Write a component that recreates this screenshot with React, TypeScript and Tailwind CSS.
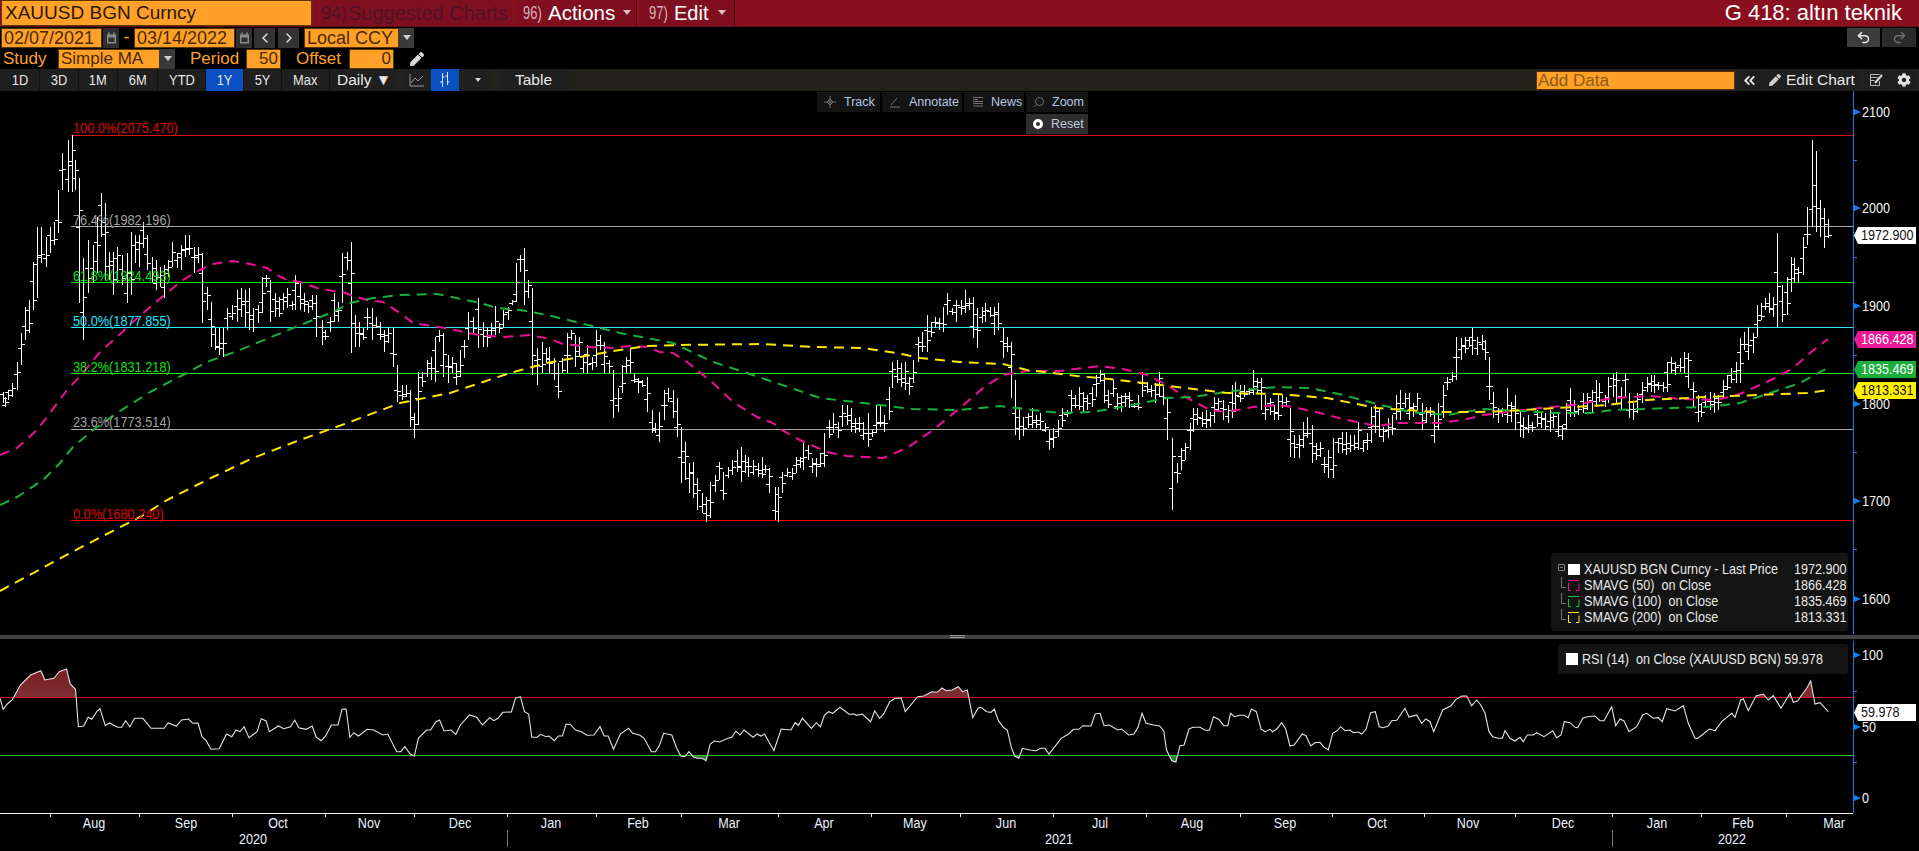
import React from "react";
import { ChevronLeft, ChevronRight, ChevronsLeft, Undo2, Redo2, Search } from "lucide-react";
import { FaCog, FaPen } from "react-icons/fa";

const BARS = `3,392,403 5,397,407 8,390,400 12,383,397 17,362,390 21,333,365 25,307,340 29,300,333 33,262,310 37,227,298 41,227,263 46,237,267 50,227,253 54,222,245 58,190,233 62,153,190 68,140,192 72,135,192 75,160,190 79,178,303 83,258,340 88,240,293 93,245,283 97,217,273 101,193,237 105,203,280 109,252,280 113,252,295 117,247,283 122,255,285 127,253,303 131,232,295 135,235,263 139,235,267 143,222,248 147,235,270 152,257,283 156,260,290 160,267,287 164,265,298 168,260,277 172,242,267 177,253,268 181,245,270 185,235,257 189,235,255 194,247,273 198,247,263 202,253,323 207,287,310 211,302,347 215,328,350 219,328,355 223,328,357 227,308,330 232,305,320 237,290,322 241,288,317 245,290,327 249,288,330 253,308,332 258,305,323 262,277,313 266,275,287 270,280,322 275,293,317 279,297,317 283,293,310 287,288,308 292,301,310 295,275,310 300,282,310 304,293,312 308,302,313 312,295,310 316,295,337 322,320,345 325,330,340 330,317,332 334,293,322 338,302,322 342,253,303 347,252,270 351,242,353 355,315,347 359,322,347 363,328,340 367,308,330 372,308,340 376,317,328 380,322,340 384,330,352 388,327,343 393,328,367 397,365,402 402,385,400 406,385,397 410,390,427 414,413,438 418,372,425 422,372,387 427,360,377 431,357,380 435,337,382 439,330,342 443,333,377 448,355,383 452,357,373 456,363,385 460,350,377 464,340,358 468,312,340 473,317,333 478,298,348 483,322,347 487,327,347 491,323,337 495,306,335 499,323,333 503,310,328 508,307,320 512,300,305 516,263,302 520,255,272 524,248,305 528,280,298 532,288,375 537,348,385 542,342,373 546,348,363 549,347,373 554,358,380 558,363,398 562,358,373 567,333,373 571,330,340 575,335,367 579,337,357 583,355,373 587,345,373 592,357,370 596,330,367 600,335,350 604,342,373 609,360,373 613,370,418 618,388,412 622,365,393 626,357,373 630,348,373 634,373,383 638,378,393 642,380,387 647,377,412 652,410,433 655,423,433 659,412,442 664,390,420 668,388,402 673,390,418 677,398,437 681,427,483 685,442,480 689,463,493 693,462,498 697,478,510 702,493,513 706,497,522 710,482,518 715,475,492 719,462,480 723,472,500 728,467,478 732,460,475 737,450,472 741,447,482 745,455,473 748,457,477 753,460,475 758,463,477 762,457,478 765,465,473 769,468,493 775,487,520 778,487,522 782,472,493 787,468,477 792,468,480 796,457,473 800,457,468 803,443,470 808,445,460 812,458,473 816,458,477 820,453,467 824,433,467 829,420,438 833,413,433 838,422,438 842,405,427 847,405,425 851,408,432 855,418,433 859,417,432 863,422,440 868,413,447 872,430,437 876,405,433 880,405,427 884,415,432 889,387,420 892,362,388 897,360,383 901,363,387 905,362,390 909,377,395 913,360,383 918,337,362 922,332,352 927,315,352 931,322,337 935,317,328 939,318,330 943,307,332 947,293,315 952,308,315 956,300,322 961,300,315 965,290,313 969,298,310 973,297,338 977,308,348 982,307,323 985,303,322 990,307,317 994,307,335 998,303,330 1003,328,358 1007,337,352 1011,342,398 1015,380,435 1019,407,440 1023,417,436 1028,413,428 1032,408,428 1036,415,428 1040,413,430 1045,423,432 1049,430,450 1053,428,448 1058,420,437 1062,408,427 1067,410,417 1071,390,413 1075,395,408 1079,387,410 1083,392,412 1087,395,410 1092,387,407 1096,375,397 1100,370,382 1104,373,403 1108,390,408 1113,380,397 1117,393,410 1121,395,412 1125,393,407 1129,392,408 1134,403,408 1138,395,410 1142,372,397 1147,382,393 1151,385,397 1155,383,403 1159,372,397 1163,387,405 1167,398,440 1172,438,510 1177,463,483 1181,448,470 1185,443,460 1190,423,450 1193,408,432 1197,408,425 1202,412,427 1206,410,428 1210,412,427 1214,397,423 1218,398,412 1223,400,420 1228,405,423 1232,385,418 1235,382,410 1240,385,402 1244,385,397 1249,388,395 1253,370,395 1257,378,393 1261,378,410 1265,395,420 1270,398,415 1274,405,420 1278,395,420 1282,395,408 1286,397,407 1290,408,457 1294,435,458 1299,435,458 1303,422,448 1307,417,438 1312,425,463 1316,443,460 1320,442,457 1324,457,473 1328,450,478 1333,438,478 1338,438,453 1342,432,453 1346,432,455 1350,435,452 1354,435,450 1358,422,450 1363,440,452 1367,433,450 1371,407,443 1375,405,433 1379,408,437 1383,427,442 1388,418,438 1392,415,435 1396,395,420 1400,390,420 1405,393,408 1409,393,420 1413,403,417 1417,393,410 1422,403,430 1426,407,423 1430,407,417 1434,412,443 1438,403,430 1443,385,418 1447,377,390 1452,372,382 1456,337,380 1461,338,360 1465,337,353 1469,337,347 1472,328,355 1477,337,355 1482,335,350 1485,340,360 1489,357,400 1493,392,418 1498,408,423 1502,408,417 1507,388,423 1511,402,422 1515,395,430 1520,410,437 1523,417,438 1528,415,433 1532,422,432 1537,410,427 1541,413,428 1545,413,430 1550,410,432 1553,412,428 1558,413,437 1562,425,440 1566,403,430 1570,388,417 1574,400,417 1578,405,415 1583,393,413 1587,393,410 1592,390,413 1596,380,407 1599,383,402 1605,395,407 1608,377,403 1613,373,397 1616,372,403 1621,387,410 1625,373,397 1629,393,418 1633,403,420 1637,393,413 1642,382,403 1647,377,392 1651,375,392 1654,375,393 1658,382,390 1663,382,392 1667,362,392 1671,357,373 1675,362,375 1680,358,372 1684,352,373 1688,353,388 1693,382,407 1698,395,422 1701,403,417 1705,395,407 1710,392,410 1714,393,413 1718,395,410 1723,380,398 1727,375,390 1731,368,383 1736,362,383 1740,338,383 1744,332,350 1748,327,360 1753,333,353 1757,305,337 1761,303,320 1765,298,310 1769,293,313 1773,297,317 1777,233,327 1782,285,322 1787,277,315 1791,257,292 1794,258,283 1798,267,283 1803,237,275 1807,207,245 1812,140,227 1816,151,232 1820,200,237 1824,208,248 1828,219,238`
  .split(" ").map((s) => s.split(",").map(Number));

const rnd = (i: number) => { const v = Math.sin(i * 12.9898) * 43758.5453; return v - Math.floor(v); };
const barsPath = BARS.map(([x, t, b], i) => {
  const o = Math.round(t + (b - t) * (0.2 + 0.6 * rnd(i)));
  const c = i === BARS.length - 1 ? 235 : Math.round(t + (b - t) * (0.2 + 0.6 * rnd(i + 500)));
  return `M${x + 0.5} ${t}V${b}M${x - 3} ${o + 0.5}H${x}M${x + 1} ${c + 0.5}H${x + 4}`;
}).join("");

const PINK = "0,455 17,448 37,430 50,413 67,390 83,373 100,352 117,337 133,322 150,307 167,293 183,280 200,270 213,264 233,261 250,264 267,268 277,275 287,280 300,282 317,288 333,291 343,292 353,296 367,300 383,302 400,313 413,323 433,326 450,329 473,334 480,335 503,337 530,335 550,339 563,344 590,347 613,348 630,346 647,347 660,352 673,353 687,362 713,383 733,402 757,417 773,423 780,429 800,440 827,452 847,456 883,458 907,448 933,430 960,408 983,388 1003,375 1027,371 1060,371 1100,366 1123,369 1147,375 1167,385 1187,398 1210,410 1227,412 1253,407 1277,405 1293,407 1320,413 1343,419 1377,426 1397,423 1440,423 1463,420 1483,415 1540,408 1573,405 1613,398 1650,396 1680,399 1717,400 1740,394 1773,379 1793,368 1810,353 1828,339";
const GREEN = "0,505 17,497 43,480 60,463 73,447 93,430 117,413 150,392 183,375 207,362 240,350 293,328 333,312 350,303 373,298 400,295 437,294 480,303 497,308 520,310 547,315 580,323 620,333 673,343 713,362 747,373 797,390 820,398 863,403 913,409 960,410 1000,406 1033,410 1060,413 1093,412 1127,406 1167,398 1193,397 1233,391 1277,387 1310,388 1343,395 1377,404 1410,412 1447,415 1483,409 1557,413 1590,413 1613,410 1673,408 1707,407 1740,403 1773,392 1800,383 1828,368";
const YELLOW = "0,591 70,553 140,517 167,500 213,477 253,458 300,440 350,422 400,403 450,393 480,383 510,373 547,363 580,357 613,351 647,346 680,345 763,344 813,347 863,348 897,353 920,358 960,362 1003,364 1027,370 1077,376 1110,379 1143,383 1177,387 1227,393 1277,394 1327,398 1377,408 1437,412 1473,412 1507,411 1557,408 1607,405 1647,400 1707,397 1757,395 1807,393 1828,390";

const R1 = [0,205,8,238,18,222,30,210,50,165,75,135,100,122,110,150,132,145,145,125,163,117,172,162,185,178,192,290,205,288,216,262,225,268,238,243,245,236,258,287,268,279,288,292,298,292,308,272,318,290,330,265,350,265,370,295,402,295,412,279,432,288,445,270,462,267,472,280,485,279,495,320,505,332,517,358,537,356,555,312,568,320,578,300,588,305,598,290,610,323,630,305,640,266,652,273,660,305,682,288,695,296,712,290,722,270,732,293,750,298,765,288,775,322,787,332,798,318,812,285,828,285,838,238,848,237,857,322,867,308,878,318,900,298,915,300,938,315,950,312,972,365,982,365,992,350,1005,372,1015,378,1025,325,1045,300,1055,300,1068,275,1077,270,1088,303,1105,300,1117,313,1128,285,1150,255,1168,262,1182,285,1200,263,1210,272,1220,265,1232,247,1253,246,1263,205,1275,200,1285,245,1295,252,1303,322,1316,322,1325,313,1338,320,1345,318,1358,332,1368,318,1378,318,1387,282,1398,284,1410,300,1425,305,1438,316,1455,315,1470,290,1480,318,1490,318,1503,358,1520,312,1540,295,1550,310,1568,316];
const R2 = [10,325,28,365,38,365,48,345,58,310,78,315,90,355,100,378,110,380,120,365,130,380,140,385,152,385,162,392,172,342,182,333,195,336,215,325,225,322,235,303,245,315,255,300,277,322,287,312,296,318,305,312,328,362,346,297,370,300,380,278,388,286,398,265,420,295,432,278,442,290,452,255,462,245,472,250,490,232,512,253,525,252,530,256,545,252,565,275,575,243,587,265,597,252,612,215,625,205,640,204,650,245,680,200,695,198,715,185,728,187,740,174,750,182,765,180,780,170,790,185,802,180,815,263,828,235,835,232,850,245,860,247,868,237,878,272,890,292,900,300,910,353,918,378,928,385,937,355,955,360,970,362,982,355,992,355,1002,372,1032,325,1050,312,1062,298,1075,298,1085,287,1105,288,1115,252,1127,250,1137,287,1150,285,1170,300,1180,297,1197,315,1210,312,1220,292,1230,250,1240,280,1258,285,1273,288,1283,302,1290,360,1303,392,1313,396,1323,347,1333,345,1345,297,1355,292,1372,292,1385,301,1395,301,1405,260,1418,268,1430,287,1440,287,1447,250,1456,260,1470,256,1480,256,1490,263,1498,237,1510,245,1522,298,1532,305];
const R3 = [0,208,8,215,20,207,35,188,47,207,60,258,72,255,97,222,108,227,122,258,135,248,150,247,162,262,175,270,188,220,200,213,212,200,225,212,240,210,250,218,265,216,275,222,288,208,302,158,316,155,328,200,340,203,355,198,365,182,380,181,405,145,417,171,440,165,455,190,467,177,480,185,491,215,518,150,543,137,558,118,575,108,590,108,605,137,620,120,632,135,645,160,657,215,668,230,685,235,697,235];
const R4 = [15,572,30,595,45,603,60,592,70,605,82,585,100,585,110,578,132,590,158,572,170,593,183,585,193,545,210,548,225,562,233,563,248,535,262,530,285,528,300,542,312,542,335,500,347,557,360,537,372,543,387,575,410,560,428,525,440,520,460,535,475,533,487,545,500,506,525,513,550,497,565,550,585,595,592,596,610,582,628,567,645,572,665,545,695,520,705,532,722,480,730,476,745,512,768,468,790,462,805,480,820,467,843,505,870,460,880,487,893,483,905,465,920,445,932,423,945,492,960,488,985,515];
const conv = (a: number[], sx: number, ox: number, oy: number) => {
  const out: string[] = [];
  for (let i = 0; i < a.length; i += 2) out.push(`${(ox + a[i] / sx).toFixed(1)},${(oy + a[i + 1] / 3).toFixed(1)}`);
  return out;
};
const rsiPts = [...conv(R1, 2.45, 0, 630), ...conv(R2, 2.45, 640, 630), ...conv(R3, 3, 1270, 660), ...conv(R4, 3, 1500, 540)];
const rsiStr = rsiPts.join(" ");
const rsiLast = rsiPts[rsiPts.length - 1].split(",")[0];

const MONTHS: [string, number][] = [["Aug", 94], ["Sep", 186], ["Oct", 278], ["Nov", 369], ["Dec", 460], ["Jan", 551], ["Feb", 638], ["Mar", 729], ["Apr", 824], ["May", 915], ["Jun", 1006], ["Jul", 1100], ["Aug", 1192], ["Sep", 1285], ["Oct", 1377], ["Nov", 1468], ["Dec", 1563], ["Jan", 1657], ["Feb", 1743], ["Mar", 1834]];
const XTICKS = [50, 139, 232, 325, 414, 507, 596, 681, 778, 871, 960, 1053, 1146, 1240, 1332, 1424, 1515, 1612, 1701, 1786];

function T({ x, y, c = "#fff", s = 0.84, a = "start", children }: { x: number; y: number; c?: string; s?: number; a?: "start" | "middle"; children: React.ReactNode }) {
  return <text transform={`translate(${x},${y}) scale(${s},1)`} fill={c} fontSize={15} textAnchor={a}>{children}</text>;
}

const FIB: [string, number, string, string, number, number][] = [
  ["100.0%(2075.470)", 135, "#d81010", "#e00000", 133, 0.85],
  ["76.4%(1982.196)", 226, "#a8a8a8", "#a0a0a0", 225, 0.85],
  ["61.8%(1924.493)", 282, "#00f000", "#10e010", 281, 0.85],
  ["50.0%(1877.855)", 327, "#30e0f0", "#20e0ff", 326, 0.85],
  ["38.2%(1831.218)", 373, "#20e020", "#10e010", 372, 0.85],
  ["23.6%(1773.514)", 429, "#a8a8a8", "#a0a0a0", 427, 0.85],
  ["0.0%(1680.240)", 520, "#ff0000", "#e00000", 519, 0.85],
];

function Tag({ y, bg, fg, text, h = 17 }: { y: number; bg: string; fg: string; text: string; h?: number }) {
  return (
    <g>
      <polygon points={`1854,${y + h / 2} 1858,${y} 1916,${y} 1916,${y + h} 1858,${y + h}`} fill={bg} />
      <T x={1861} y={y + 13} c={fg}>{text}</T>
    </g>
  );
}

function Chart() {
  return (
    <svg viewBox="0 91 1919 760" width={1919} height={760} className="block">
      {FIB.map(([, y, c]) => <line key={y} x1={71} x2={1853} y1={y + 0.5} y2={y + 0.5} stroke={c} strokeWidth={1} shapeRendering="crispEdges" />)}
      <path d={barsPath} stroke="#fff" strokeWidth={1} fill="none" shapeRendering="crispEdges" />
      <polyline points={PINK} fill="none" stroke="#ec1094" strokeWidth={2} strokeDasharray="10 7" />
      <polyline points={GREEN} fill="none" stroke="#16b03c" strokeWidth={2} strokeDasharray="10 7" />
      <polyline points={YELLOW} fill="none" stroke="#ffe800" strokeWidth={2} strokeDasharray="10 7" />
      {FIB.map(([t, y, , c, by, s]) => <T key={t} x={73} y={by} c={c} s={s}>{t}</T>)}

      <defs>
        <clipPath id="above"><rect x="0" y="640" width="1853" height="57" /></clipPath>
        <clipPath id="below"><rect x="0" y="755" width="1853" height="50" /></clipPath>
        <linearGradient id="redg" x1="0" y1="0" x2="0" y2="1"><stop offset="0" stopColor="#7c1d22" /><stop offset="1" stopColor="#7a5a5c" /></linearGradient>
        <linearGradient id="grng" x1="0" y1="0" x2="0" y2="1"><stop offset="0" stopColor="#5f8f66" /><stop offset="1" stopColor="#2c7a3a" /></linearGradient>
      </defs>
      <polygon points={`0,697 ${rsiStr} ${rsiLast},697`} fill="url(#redg)" clipPath="url(#above)" />
      <polygon points={`0,755 ${rsiStr} ${rsiLast},755`} fill="url(#grng)" clipPath="url(#below)" />
      <line x1={0} x2={1853} y1={697.5} y2={697.5} stroke="#d81018" shapeRendering="crispEdges" />
      <line x1={0} x2={1853} y1={755.5} y2={755.5} stroke="#38c838" shapeRendering="crispEdges" />
      <polyline points={rsiStr} fill="none" stroke="#e4e4e4" strokeWidth={1.1} />

      {/* price + rsi axes */}
      <path d="M1853.5 91V634M1853.5 641V813" stroke="#0f7cf0" strokeWidth={1.2} shapeRendering="crispEdges" />
      {[160, 257, 355, 452, 549, 691, 762].map((y) => <line key={y} x1={1853} x2={1857} y1={y + 0.5} y2={y + 0.5} stroke="#0f7cf0" shapeRendering="crispEdges" />)}
      {([[112, "2100"], [208, "2000"], [306, "1900"], [404, "1800"], [501, "1700"], [599, "1600"], [655, "100"], [727, "50"], [798, "0"]] as [number, string][]).map(([y, t]) => (
        <g key={t}>
          <polygon points={`1853,${y - 3.5} 1861,${y} 1853,${y + 3.5}`} fill="#0f7cf0" />
          <T x={1862} y={y + 5} c="#f4f4f4">{t}</T>
        </g>
      ))}
      <Tag y={227} bg="#ffffff" fg="#111" text="1972.900" />
      <Tag y={331} bg="#ea1a96" fg="#fff" text="1866.428" />
      <Tag y={361} bg="#1aaf3c" fg="#fff" text="1835.469" />
      <Tag y={382} bg="#fff000" fg="#111" text="1813.331" />
      <Tag y={704} bg="#ffffff" fg="#111" text="59.978" />

      {/* time axis */}
      <line x1={0} x2={1853} y1={813.5} y2={813.5} stroke="#f0f0f0" strokeWidth={1} shapeRendering="crispEdges" />
      {XTICKS.map((x) => <line key={x} x1={x + 0.5} x2={x + 0.5} y1={813} y2={817} stroke="#e8e8e8" shapeRendering="crispEdges" />)}
      {MONTHS.map(([m, x], i) => <T key={i} x={x} y={828} a="middle" c="#eaf2ff">{m}</T>)}
      <T x={253} y={844} a="middle" c="#eaf2ff">2020</T>
      <T x={1059} y={844} a="middle" c="#eaf2ff">2021</T>
      <T x={1732} y={844} a="middle" c="#eaf2ff">2022</T>
      <line x1={507.5} x2={507.5} y1={830} y2={847} stroke="#777" shapeRendering="crispEdges" />
      <line x1={1612.5} x2={1612.5} y1={830} y2={847} stroke="#777" shapeRendering="crispEdges" />
    </svg>
  );
}

function Cal() {
  return (
    <div className="w-[16px] h-[20px] bg-[#2f2f2f] flex items-center justify-center">
      <svg width="11" height="12" viewBox="0 0 11 12"><path d="M1 2.5h9v9H1z" fill="#8a8a8a" /><path d="M2.5 5.5h6v4.5h-6z" fill="#2f2f2f" /><path d="M3 0.5v2M8 0.5v2" stroke="#b0b0b0" strokeWidth="1.2" /></svg>
    </div>
  );
}
function Drop() {
  return <div className="w-[15px] h-[20px] bg-[#3a3a3a] flex items-center justify-center"><div className="w-0 h-0 border-l-[4px] border-r-[4px] border-t-[5px] border-l-transparent border-r-transparent border-t-[#d0d0d0]" /></div>;
}
function Amber({ w, children, right }: { w: string; children: React.ReactNode; right?: boolean }) {
  return <div className={`${w} h-[20px] bg-[#ffa028] border border-[#5a3208] text-[#4a2a00] leading-[18px] px-[2px] whitespace-nowrap overflow-hidden ${right ? "text-right" : ""}`}>{children}</div>;
}
const BTNS: [string, string, boolean][] = [["1D", "w-[39px]", false], ["3D", "w-[38px]", false], ["1M", "w-[38px]", false], ["6M", "w-[39px]", false], ["YTD", "w-[47px]", false], ["1Y", "w-[37px]", true], ["5Y", "w-[37px]", false], ["Max", "w-[47px]", false]];

function Legend() {
  const rows: [string, string, string][] = [["SMAVG (50)  on Close", "1866.428", "#ec1094"], ["SMAVG (100)  on Close", "1835.469", "#16c03c"], ["SMAVG (200)  on Close", "1813.331", "#ffe800"]];
  return (
    <div className="absolute left-[1551px] top-[462px] w-[297px] h-[78px] bg-[#141414] rounded-[3px] pt-[8px] pl-[6px] pr-[7px] text-[15px] text-[#eaeaea]">
      <div className="flex items-center h-[16px]">
        <svg width="11" height="16" viewBox="0 0 11 16" className="shrink-0"><path d="M1.5 3.5h6v6h-6z" fill="none" stroke="#808080" /><path d="M3 6.5h3" stroke="#808080" /></svg>
        <div className="w-[12px] h-[11px] bg-white shrink-0 mr-[4px]" />
        <span className="w-[200px] shrink-0 origin-left scale-x-[0.84] whitespace-pre">XAUUSD BGN Curncy - Last Price</span>
        <span className="ml-auto origin-right scale-x-[0.84]">1972.900</span>
      </div>
      {rows.map(([l, v, c]) => (
        <div key={v} className="flex items-center h-[16px]">
          <svg width="27" height="16" viewBox="0 0 27 16" className="shrink-0" fill="none">
            <path d="M4.5 0V10.5H9" stroke="#707070" />
            <path d="M11 3.5h11" stroke={c} /><path d="M11.5 6V13.5H14M19 13.5h3V6.5" stroke={c} />
          </svg>
          <span className="w-[200px] shrink-0 origin-left scale-x-[0.84] whitespace-pre">{l}</span>
          <span className="ml-auto origin-right scale-x-[0.84]">{v}</span>
        </div>
      ))}
    </div>
  );
}

export default function App() {
  return (
    <div className="w-[1919px] h-[851px] bg-black overflow-hidden font-['Liberation_Sans',Arial,sans-serif]">
      {/* title bar */}
      <div className="flex h-[27px] bg-[#8a1020] border-b border-[#5c0d18] text-[20px] leading-[26px]">
        <div className="ml-[1px] w-[311px] h-[26px] bg-[#ffa028] border border-[#5a3208] text-[#2a1800] text-[19px] leading-[24px] pl-[3px]">XAUUSD BGN Curncy</div>
        <div className="ml-[1px] w-[200px] bg-[#7e1020] text-[#521028] flex pl-[8px]"><span className="w-[27px] shrink-0 text-[18px]">94)</span>Suggested Charts</div>
        <div className="ml-[2px] w-[122px] bg-[#7f0f1e] text-white flex pl-[8px] border-r border-[#4a0a14] text-[20.5px]">
          <span className="w-[25px] text-[#d9b4bc] text-[18px] origin-left scale-x-[0.72]">96)</span>Actions
          <div className="ml-[8px] mt-[10px] w-0 h-0 border-l-[4px] border-r-[4px] border-t-[5px] border-l-transparent border-r-transparent border-t-[#d8c0c4]" />
        </div>
        <div className="ml-[3px] w-[95px] bg-[#7f0f1e] text-white flex pl-[9px] border-r border-[#4a0a14]">
          <span className="w-[25px] text-[#d9b4bc] text-[18px] origin-left scale-x-[0.72]">97)</span>Edit
          <div className="ml-[10px] mt-[10px] w-0 h-0 border-l-[4px] border-r-[4px] border-t-[5px] border-l-transparent border-r-transparent border-t-[#d8c0c4]" />
        </div>
        <div className="ml-auto pr-[17px] text-white text-[22px]">G 418: altın teknik</div>
      </div>

      {/* date row */}
      <div className="flex items-center h-[21px] text-[18px] text-[#4a2a00]">
        <div className="ml-[1px]"><Amber w="w-[101px]">02/07/2021</Amber></div>
        <div className="ml-[1px]"><Cal /></div>
        <span className="w-[15px] text-center text-[#ffa028]">-</span>
        <Amber w="w-[101px]">03/14/2022</Amber>
        <div className="ml-[1px]"><Cal /></div>
        <div className="ml-[2px] w-[21px] h-[20px] bg-[#333] flex items-center justify-center"><ChevronLeft size={16} color="#e8e8e8" /></div>
        <div className="ml-[3px] w-[21px] h-[20px] bg-[#333] flex items-center justify-center"><ChevronRight size={16} color="#e8e8e8" /></div>
        <div className="ml-[5px]"><Amber w="w-[95px]">Local CCY</Amber></div>
        <Drop />
        <div className="ml-auto mr-[3px] flex gap-[2px]">
          <div className="w-[33px] h-[19px] bg-[#3c3c3c] flex items-center justify-center"><Undo2 size={15} color="#e8e8e8" strokeWidth={2.4} /></div>
          <div className="w-[34px] h-[19px] bg-[#2b2b2b] flex items-center justify-center"><Redo2 size={15} color="#6e6e6e" strokeWidth={2.4} /></div>
        </div>
      </div>

      {/* study row */}
      <div className="flex items-center h-[21px] text-[17px] text-[#ffa028]">
        <span className="w-[58px] pl-[3px]">Study</span>
        <Amber w="w-[102px]">Simple MA</Amber>
        <Drop />
        <span className="ml-[15px] w-[56px]">Period</span>
        <Amber w="w-[35px]" right>50</Amber>
        <span className="ml-[15px] w-[53px]">Offset</span>
        <Amber w="w-[45px]" right>0</Amber>
        <FaPen size={14} color="#d8d8d8" className="ml-[16px]" />
      </div>

      {/* toolbar */}
      <div className="flex h-[22px] bg-[#23211c] text-[14px] text-[#e8e8e8] leading-[22px]">
        <div className="flex gap-px bg-[#111]">
          {BTNS.map(([t, w, on]) => (
            <div key={t} className={`${w} text-center ${on ? "bg-[#0a50c0]" : "bg-[#1f1f1f]"}`}><span className="inline-block scale-x-[0.92]">{t}</span></div>
          ))}
          <div className="w-[68px] bg-[#1f1f1f] text-center text-[15.5px]">Daily ▼</div>
        </div>
        <div className="ml-[5px] w-[27px] bg-[#1f1f1f] flex items-center justify-center">
          <svg width="16" height="14" viewBox="0 0 16 14" fill="none" stroke="#9a9a9a"><path d="M1 1v12h14" /><path d="M2 10l4-5 3 3 5-5" /></svg>
        </div>
        <div className="ml-px w-[28px] bg-[#0a50c0] flex items-center justify-center">
          <svg width="14" height="16" viewBox="0 0 14 16" fill="none" stroke="#dde8ff"><path d="M4.5 1v14M9.5 0v13M2 10h2.5M4.5 5h2M7.5 4h2M9.5 10h2" /></svg>
        </div>
        <div className="ml-[6px] w-[26px] bg-[#1f1f1f] flex items-center justify-center"><div className="w-0 h-0 border-l-[3px] border-r-[3px] border-t-[4px] border-l-transparent border-r-transparent border-t-[#d8d8d8]" /></div>
        <div className="ml-[7px] w-[71px] bg-[#1f1f1f] text-center text-[15.5px]">Table</div>
        <div className="ml-auto my-[2px] w-[199px] h-[19px] bg-[#ffa028] border border-[#5a3208] text-[17px] text-[#8a5a18] leading-[17px] pl-[1px]">Add Data</div>
        <div className="ml-[3px] w-[23px] bg-[#1f1f1f] flex items-center justify-center"><ChevronsLeft size={17} color="#e8e8e8" strokeWidth={2.6} /></div>
        <div className="ml-[2px] w-[99px] bg-[#1f1f1f] flex items-center pl-[6px] gap-[5px] text-[15.5px] whitespace-nowrap"><FaPen size={12} color="#d0d0d0" />Edit Chart</div>
        <div className="ml-[2px] w-[25px] bg-[#1f1f1f] flex items-center justify-center">
          <svg width="15" height="14" viewBox="0 0 15 14" fill="none" stroke="#b8b8b8"><path d="M1.5 1.5h9M1.5 4.5h7M1.5 7.5h4M1.5 1.5v11h9V8" /><path d="M6 10l7-8" strokeWidth="2" stroke="#d8d8d8" /></svg>
        </div>
        <div className="ml-[2px] mr-[2px] w-[26px] bg-[#1f1f1f] flex items-center justify-center"><FaCog size={14} color="#e4e4e4" /></div>
      </div>

      {/* chart */}
      <div className="relative h-[760px]">
        <Chart />

        <div className="absolute left-[817px] top-[1px] flex gap-[2px] h-[20px] text-[12.5px] text-[#b8c8e0] leading-[20px]">
          <div className="w-[63px] bg-[#141414] flex items-center pl-[7px] gap-[8px]">
            <svg width="12" height="12" viewBox="0 0 12 12" fill="none" stroke="#707070"><path d="M6 0v12M0 6h12" /><path d="M6 3l3 3-3 3-3-3z" /></svg>Track
          </div>
          <div className="w-[80px] bg-[#141414] flex items-center pl-[7px] gap-[8px]">
            <svg width="12" height="12" viewBox="0 0 12 12" fill="none" stroke="#707070"><path d="M1 11h10M2 9l6-7" /></svg>Annotate
          </div>
          <div className="w-[60px] bg-[#141414] flex items-center pl-[8px] gap-[7px]">
            <svg width="12" height="12" viewBox="0 0 12 12" stroke="#707070" fill="none"><path d="M1 1.5h10M1 3.5h5M1 5.5h10M1 7.5h10M1 10h10" /></svg>News
          </div>
          <div className="w-[62px] bg-[#141414] flex items-center pl-[7px] gap-[7px]"><Search size={12} color="#707070" className="-scale-x-100" />Zoom</div>
        </div>
        <div className="absolute left-[1026px] top-[23px] w-[62px] h-[20px] bg-[#2e2e2e] flex items-center pl-[7px] gap-[8px] text-[12.5px] text-[#c0cbdc]">
          <div className="w-[10px] h-[10px] rounded-full border-[3px] border-white" />Reset
        </div>

        <Legend />

        <div className="absolute left-0 top-[544px] w-full h-[4px] bg-[#444]">
          <div className="absolute left-[950px] top-[0px] w-[15px] h-[3px] border-y border-[#9a9a9a]" />
        </div>

        <div className="absolute left-[1558px] top-[553px] w-[290px] h-[30px] bg-[#141414] rounded-[3px] flex items-center pl-[8px] text-[15px] text-[#eaeaea]">
          <div className="w-[12px] h-[12px] bg-white mr-[4px] shrink-0" />
          <span className="origin-left scale-x-[0.84] whitespace-pre">RSI (14)  on Close (XAUUSD BGN) 59.978</span>
        </div>
      </div>
    </div>
  );
}
